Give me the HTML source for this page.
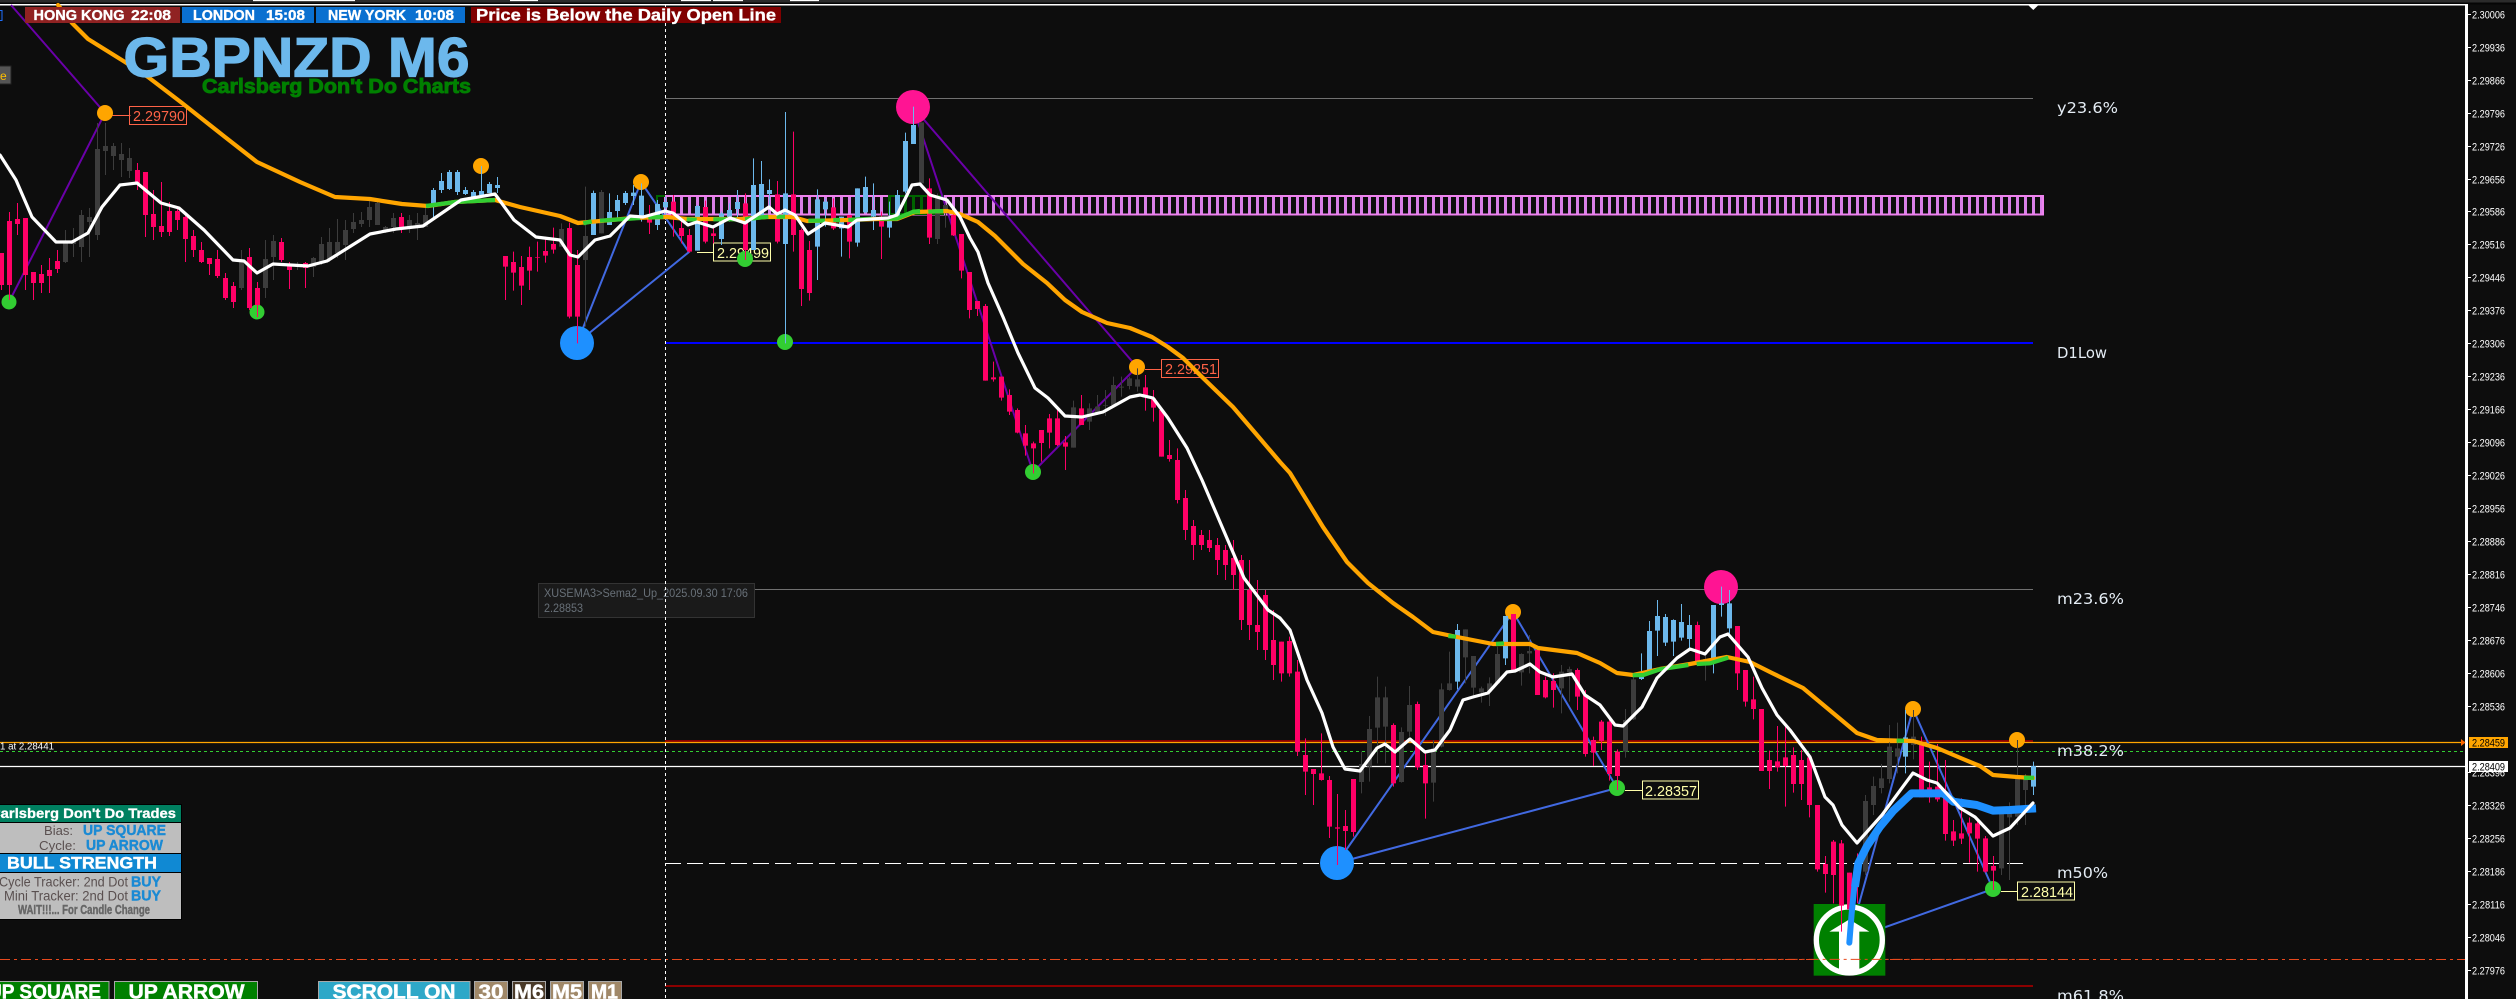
<!DOCTYPE html>
<html>
<head>
<meta charset="utf-8">
<title>GBPNZD M6</title>
<style>
html,body{margin:0;padding:0;background:#0d0d0d;width:2516px;height:999px;overflow:hidden}
svg{display:block;position:absolute;left:0;top:0}
text{font-family:"Liberation Sans",Arial,sans-serif;white-space:pre}
.b{font-weight:bold}
.ax text{fill:#fff;font-size:11px}
.fib text{font-family:"DejaVu Sans",sans-serif;font-size:15px;fill:#e4ecf4}
.pw{stroke:#ff0066;stroke-width:1;fill:none}
.pb{stroke:#ff0066;stroke-width:5;fill:none}
.gw{stroke:#3c3c3c;stroke-width:1;fill:none}
.gb{stroke:#3c3c3c;stroke-width:5;fill:none}
.bw{stroke:#6cb8ec;stroke-width:1;fill:none}
.bb{stroke:#6cb8ec;stroke-width:5;fill:none}
.z .pw,.z .gw,.z .bw{stroke-width:3}
.z .pb,.z .gb,.z .bb{stroke-width:15}
.ma{fill:none;stroke-linejoin:round;stroke-linecap:round}
.gr{fill:none;stroke:#32cd32;stroke-linecap:butt}
</style>
</head>
<body>
<svg width="2516" height="999" viewBox="0 0 2516 999" xmlns="http://www.w3.org/2000/svg">
<rect width="2516" height="999" fill="#0d0d0d"/>
<!-- top strip -->
<rect width="2516" height="2.5" fill="#2b2b2b"/>
<rect y="2.5" width="2516" height="2" fill="#050505"/>
<path d="M253 .5H355M510 .5H538M681 .5H711M713 .5H743M790 .5H819" stroke="#fff" stroke-width="1.2"/>
<rect y="4" width="2467" height="1.5" fill="#fff"/>
<rect x="2465" y="4" width="3" height="995" fill="#fff"/>
<path d="M2028 5L2038.5 5L2033.3 10Z" fill="#fff"/>

<!-- horizontal levels -->
<path d="M665 98.5H2033M665 589.5H2033" stroke="#707070" stroke-width="1"/>
<path d="M665 343H2033" stroke="#0000ff" stroke-width="2"/>
<path d="M665 741H2033M665 986H2033" stroke="#8b0000" stroke-width="2"/>
<path d="M0 742.5H2465" stroke="#ffa500" stroke-width="1.3"/>
<path d="M0 751.5H2465" stroke="#32cd32" stroke-width="1" stroke-dasharray="3 3"/>
<path d="M0 766.5H2465" stroke="#fff" stroke-width="1.2"/>
<path d="M665 863.5H2027" stroke="#fff" stroke-width="1" stroke-dasharray="16 6"/>
<path d="M0 959.5H2465" stroke="#e8491d" stroke-width="1" stroke-dasharray="10 4 3 4"/>
<path d="M2461 739L2465.5 742.5L2461 746Z" fill="#ff6600"/>

<!-- tooltip -->
<rect x="538.5" y="583.5" width="216" height="34" fill="#1a1a1a" stroke="#333"/>
<text x="544" y="597" font-size="12" fill="#687078" textLength="204" lengthAdjust="spacingAndGlyphs">XUSEMA3&gt;Sema2_Up_2025.09.30 17:06</text>
<text x="544" y="612" font-size="12" fill="#687078" textLength="39" lengthAdjust="spacingAndGlyphs">2.28853</text>

<!-- supply box -->
<path d="M664 205H2044" stroke="#d97fe8" stroke-width="19" stroke-dasharray="3 5"/>
<rect x="665" y="196" width="1378" height="18.5" fill="none" stroke="#ee82ee" stroke-width="2"/>
<path d="M888 205H944" stroke="#006400" stroke-width="19" stroke-dasharray="3 5"/>
<path d="M657 213V196H665M888 196H944M888 214H944" stroke="#006400" stroke-width="2" fill="none"/>

<path d="M665.5 5V999" stroke="#fff" stroke-width="1" stroke-dasharray="3 3"/>

<!-- zigzag -->
<g fill="none" stroke="#6a00a8" stroke-width="2">
<path d="M9 302L105 113L11 5"/>
<path d="M1137 367L913 107L1033 472L1137 367"/>
</g>
<g fill="none" stroke="#4169e1" stroke-width="2">
<path d="M577 343L641 182L689 252L577 343"/>
<path d="M1337 863L1513 612L1617 788L1337 863"/>
<path d="M1849 940L1913 709L1993 889L1849 940"/>
</g>

<!-- price callouts -->
<g fill="none" stroke="#ff6347" stroke-width="1">
<path d="M112 115.5H130.5M1145 369.5H1161.5"/>
<rect x="129.5" y="106.5" width="57" height="18"/>
<rect x="1161.5" y="359.5" width="57" height="18"/>
</g>
<g fill="none" stroke="#ffffaa" stroke-width="1">
<path d="M697 252.5H713.5M1625 790.5H1642.5M2001 891.5H2017.5"/>
<rect x="713.5" y="243" width="57" height="18"/>
<rect x="1642.5" y="781" width="56" height="18"/>
<rect x="2017.5" y="882" width="57" height="18"/>
</g>
<g font-size="15" lengthAdjust="spacingAndGlyphs">
<text x="133" y="121" fill="#ff6347" textLength="52" lengthAdjust="spacingAndGlyphs">2.29790</text>
<text x="1165" y="374" fill="#ff6347" textLength="52" lengthAdjust="spacingAndGlyphs">2.29251</text>
<text x="717" y="258" fill="#ffffaa" textLength="52" lengthAdjust="spacingAndGlyphs">2.29499</text>
<text x="1645" y="796" fill="#ffffaa" textLength="52" lengthAdjust="spacingAndGlyphs">2.28357</text>
<text x="2021" y="897" fill="#ffffaa" textLength="52" lengthAdjust="spacingAndGlyphs">2.28144</text>
</g>

<!-- dots -->
<g fill="#ffa500">
<circle cx="105" cy="113" r="8"/><circle cx="481" cy="166" r="8"/><circle cx="641" cy="182" r="8"/>
<circle cx="1137" cy="367" r="8"/><circle cx="1513" cy="612" r="8"/><circle cx="1913" cy="709" r="8"/><circle cx="2017" cy="740" r="8"/>
</g>
<g fill="#32cd32">
<circle cx="9" cy="302" r="7.5"/><circle cx="257" cy="312" r="7.5"/><circle cx="745" cy="259" r="8"/><circle cx="785" cy="342" r="8"/>
<circle cx="1033" cy="472" r="8"/><circle cx="1617" cy="788" r="8"/><circle cx="1993" cy="889" r="8"/>
</g>
<g fill="#ff1493"><circle cx="913" cy="107" r="17"/><circle cx="1721" cy="587" r="17"/></g>
<g fill="#1e90ff"><circle cx="577" cy="343" r="17"/><circle cx="1337" cy="863" r="17"/></g>

<!-- buy icon -->
<g transform="translate(1700 560) scale(.33333)">
<rect x="341" y="1032" width="215" height="215" fill="#008000"/>
<circle cx="448" cy="1140" r="99" fill="none" stroke="#fff" stroke-width="16"/>
<path d="M388 1115L448 1078L508 1115H478V1240H417V1115Z" fill="#fff"/>
<path d="M11 1198H1000" stroke="#e8491d" stroke-width="3" stroke-dasharray="30 12 9 12"/>
</g>

<!-- candles region A -->
<g>
<path class="pw" d="M1.5 253V290M9.5 212V300M17.5 203V235M25.5 218V290M33.5 272V300M41.5 265V293M49.5 258V293M57.5 250V273M137.5 163V190M145.5 172V237M153.5 190V240M161.5 182V237M169.5 202V236M177.5 207V230M185.5 213V262M193.5 230V257M201.5 242V263M209.5 258V275M217.5 250V278M225.5 273V300M233.5 282V308M249.5 248V310M257.5 282V317M281.5 238V262M289.5 262V289M305.5 262V288M401.5 213V233"/>
<path class="pb" d="M1.5 253V285M9.5 221V285M17.5 219V224M25.5 218V275M33.5 272V283M41.5 274V283M49.5 270V276M57.5 261V269M137.5 170V183M145.5 172V215M153.5 214V227M161.5 226V232M169.5 211V232M177.5 211V220M185.5 217V239M193.5 236V250M201.5 250V262M209.5 258V264M217.5 259V276M225.5 278V298M233.5 286V302M249.5 257V308M257.5 288V305M281.5 242V260M289.5 265V270M305.5 263V268M401.5 217V228"/>
<path class="gw" d="M65.5 230V263M73.5 228V257M81.5 210V262M89.5 208V257M97.5 123V240M105.5 123V175M113.5 143V170M121.5 143V177M129.5 148V178M241.5 250V290M265.5 240V298M273.5 235V280M297.5 262V270M313.5 257V277M321.5 237V265M329.5 228V262M337.5 219V258M345.5 220V260M353.5 213V233M361.5 212V227M369.5 198V227M377.5 200V225M385.5 226V233M393.5 213V233M409.5 215V233M417.5 213V240M425.5 208V227"/>
<path class="gb" d="M65.5 242V262M73.5 240V244M81.5 215V247M89.5 217V222M97.5 149V235M105.5 146V151M113.5 146V156M121.5 154V160M129.5 158V171M241.5 260V288M265.5 259V288M273.5 241V257M297.5 265V267M313.5 258V267M321.5 244V262M329.5 242V260M337.5 242V253M345.5 230V245M353.5 222V229M361.5 220V224M369.5 207V220M377.5 203V225M385.5 227V230M393.5 218V227M409.5 220V227M417.5 223V227M425.5 215V227"/>
<path class="bw" d="M433.5 188V220M441.5 173V193M449.5 170V190M457.5 170V195M465.5 187V195M473.5 190V197M481.5 166V195M489.5 182V193M497.5 177V193"/>
<path class="bb" d="M433.5 190V207M441.5 181V190M449.5 172V189M457.5 172V192M465.5 190V194M473.5 192V197M481.5 191V195M489.5 184V193M497.5 185V188"/>
</g>

<!-- candles region B -->
<g class="z" transform="translate(500 130) scale(.33333)">
<path class="pw" d="M16.5 378V510M40.5 365V482M64.5 378V525M88.5 350V480M112.5 335V425M136.5 320V398M160.5 293V371M208.5 278V565M232.5 360V640M448.5 225V312M520.5 195V320M544.5 270V340M568.5 297V368M616.5 212V340M640.5 290V340M736.5 190V390M832.5 153V340M880.5 5V365M904.5 295V528M928.5 333V512M1000.5 205V300"/>
<path class="pb" d="M16.5 378V410M40.5 396V428M64.5 411V467M88.5 381V422M112.5 381V383M136.5 363V377M160.5 342V359M208.5 294V560M232.5 405V560M448.5 265V278M520.5 215V265M544.5 294V318M568.5 315V365M616.5 231V335M640.5 310V318M736.5 220V360M832.5 193V335M880.5 193V315M904.5 300V477M928.5 360V489M1000.5 232V295"/>
<path class="gw" d="M184.5 280V350M256.5 170V590M304.5 180V310"/>
<path class="gb" d="M184.5 297V350M256.5 318V390M304.5 186V310"/>
<path class="bw" d="M280.5 182V315M328.5 190V285M352.5 195V270M376.5 183V225M400.5 165V225M424.5 160V275M472.5 210V300M496.5 200V270M592.5 225V362M664.5 245V345M688.5 220V275M712.5 180V268M760.5 85V360M784.5 93V260M808.5 148V240M856.5 -54V640M952.5 178V450M976.5 205V290"/>
<path class="bb" d="M280.5 189V315M328.5 246V285M352.5 210V243M376.5 189V219M400.5 188V198M424.5 197V260M472.5 222V285M496.5 216V232M592.5 228V362M664.5 250V327M688.5 240V270M712.5 216V237M760.5 165V360M784.5 162V255M808.5 180V192M856.5 190V342M952.5 208V350M976.5 215V238"/>
</g>

<!-- candles region C -->
<g class="z" transform="translate(840 60) scale(.33333)">
<path class="pw" d="M28.5 465V595M124.5 455V597M268.5 355V552M340.5 455V528M364.5 522V655M388.5 636V775M412.5 723V768M436.5 732V962M460.5 905V965M484.5 950V1022M508.5 988V1065M532.5 1045V1120M556.5 1095V1187M580.5 1145V1240M604.5 1110V1205M628.5 1062V1165M652.5 1050V1158M676.5 1128V1230M724.5 1005V1095M916.5 945V1052M940.5 990V1085M964.5 1045V1190M988.5 1140V1205M1012.5 1165V1330"/>
<path class="pb" d="M28.5 465V545M124.5 470V500M268.5 385V533M340.5 465V526M364.5 522V632M388.5 636V750M412.5 723V747M436.5 738V962M460.5 952V958M484.5 950V1013M508.5 1005V1055M532.5 1050V1118M556.5 1120V1157M580.5 1150V1165M604.5 1110V1149M628.5 1075V1118M652.5 1075V1155M676.5 1147V1160M724.5 1045V1095M916.5 982V1005M940.5 1015V1043M964.5 1050V1190M988.5 1185V1197M1012.5 1200V1320"/>
<path class="gw" d="M244.5 187V370M292.5 400V552M316.5 430V503M700.5 1022V1163M748.5 1030V1110M772.5 1005V1065M796.5 990V1068M820.5 950V1040M844.5 950V1010M868.5 950V988M892.5 925V995"/>
<path class="gb" d="M244.5 187V370M292.5 410V537M316.5 435V460M700.5 1042V1163M748.5 1045V1085M772.5 1040V1060M796.5 1035V1037M820.5 975V1035M844.5 980V983M868.5 955V978M892.5 958V980"/>
<path class="bw" d="M4.5 470V590M52.5 385V560M76.5 350V460M100.5 370V510M148.5 425V533M172.5 390V470M196.5 218V400M220.5 140V252"/>
<path class="bb" d="M4.5 470V505M52.5 385V548M76.5 381V457M100.5 450V470M148.5 470V503M172.5 405V470M196.5 243V395M220.5 195V252"/>
</g>

<!-- candles region D -->
<g>
<path class="pw" d="M1185.5 490V540M1193.5 520V560M1201.5 530V550M1209.5 530V552M1217.5 538V575M1225.5 545V580M1233.5 540V590M1241.5 555V630M1249.5 560V640M1257.5 580V650M1265.5 590V660M1273.5 610V680"/>
<path class="pb" d="M1185.5 498V530M1193.5 526V545M1201.5 535V545M1209.5 540V548M1217.5 545V560M1225.5 550V565M1233.5 558V575M1241.5 560V620M1249.5 590V625M1257.5 625V632M1265.5 595V650M1273.5 640V665"/>
</g>

<!-- candles region E -->
<g class="z" transform="translate(1280 420) scale(.33333)">
<path class="pw" d="M4.5 665V785M28.5 650V770M52.5 720V1008M76.5 955V1125M100.5 1047V1155M124.5 940V1082M148.5 1068V1254M172.5 1122V1335M196.5 1170V1290M220.5 1077V1250M340.5 910V1100M412.5 845V1050M436.5 1000V1196M700.5 582V750M772.5 690V825M796.5 770V835M820.5 760V863M892.5 745V870M916.5 810V1010M940.5 950V1038M964.5 900V990M988.5 890V1082M1012.5 988V1110M1252.5 605V728"/>
<path class="pb" d="M4.5 665V760M28.5 663V760M52.5 755V995M76.5 1005V1055M100.5 1047V1062M124.5 1060V1080M148.5 1080V1220M172.5 1222V1226M196.5 1218V1233M220.5 1077V1236M340.5 915V1090M412.5 852V1042M436.5 1035V1090M700.5 582V750M772.5 690V825M796.5 780V832M820.5 783V810M892.5 750V830M916.5 825V1002M940.5 960V998M964.5 905V963M988.5 905V1062M1012.5 995V1068M1252.5 615V725"/>
<path class="gw" d="M244.5 995V1120M268.5 888V1085M292.5 770V1030M316.5 800V1030M364.5 922V1088M388.5 798V950M460.5 960V1145M484.5 790V982M508.5 695V812M556.5 628V790M580.5 708V835M604.5 800V848M628.5 772V858M652.5 680V790M724.5 700V797M748.5 645V760M844.5 735V880M868.5 740V845M1036.5 867V1013M1060.5 770V900M1276.5 700V782"/>
<path class="gb" d="M244.5 1032V1086M268.5 927V1040M292.5 832V923M316.5 832V920M364.5 936V1086M388.5 855V935M460.5 985V1088M484.5 808V980M508.5 790V810M556.5 628V712M580.5 708V803M604.5 805V817M628.5 790V815M652.5 702V790M724.5 702V757M748.5 693V700M844.5 755V805M868.5 747V757M1036.5 900V995M1060.5 778V898M1276.5 717V725"/>
<path class="bw" d="M532.5 612V808M676.5 588V735M1084.5 700V780M1108.5 603V757M1132.5 540V708M1156.5 582V678M1180.5 598V708M1204.5 552V662M1228.5 585V690M1300.5 555V760"/>
<path class="bb" d="M532.5 630V785M676.5 588V715M1084.5 757V777M1108.5 633V755M1132.5 588V632M1156.5 591V668M1180.5 600V665M1204.5 606V653M1228.5 615V657M1300.5 555V720"/>
</g>

<!-- candles region F -->
<g class="z" transform="translate(1700 560) scale(.33333)">
<path class="pw" d="M112.5 198V390M136.5 330V440M160.5 350V478M184.5 447V633M208.5 572V687M232.5 498V635M256.5 498V740M280.5 562V698M304.5 570V720M328.5 590V772M352.5 735V935M376.5 888V998M400.5 840V1030M424.5 840V1115M448.5 938V1048M472.5 880V1030M664.5 530V712M688.5 605V728M712.5 552V725M736.5 600V842M760.5 780V858M784.5 715V852M808.5 772V908M832.5 778V935M856.5 828V938M880.5 888V990"/>
<path class="pb" d="M112.5 198V340M136.5 330V425M160.5 418V447M184.5 447V633M208.5 600V633M232.5 604V622M256.5 592V618M280.5 585V672M304.5 600V672M328.5 592V735M352.5 735V928M376.5 912V942M400.5 845V945M424.5 850V1037M448.5 938V1048M472.5 935V940M664.5 555V712M688.5 682V712M712.5 680V718M736.5 712V822M760.5 814V842M784.5 820V836M808.5 788V820M832.5 790V836M856.5 835V935M880.5 918V932"/>
<path class="gw" d="M496.5 705V945M520.5 650V765M544.5 612V700M568.5 495V670M592.5 488V640M640.5 450V598M904.5 755V945M928.5 727V960M952.5 540V795M976.5 642V795"/>
<path class="gb" d="M496.5 723V935M520.5 678V735M544.5 655V684M568.5 560V657M592.5 565V590M640.5 530V555M904.5 760V925M928.5 757V772M952.5 655V770M976.5 655V690"/>
<path class="bw" d="M64.5 80V170M88.5 90V220M616.5 450V640M1000.5 605V705"/>
<path class="bb" d="M64.5 130V135M88.5 130V205M616.5 532V590M1000.5 618V680"/>
</g>

<!-- blue MA -->
<g class="ma" transform="translate(1700 560) scale(.33333)" stroke="#1e90ff">
<path stroke-width="18" d="M448 1148L455 1060L465 960"/>
<path stroke-width="24" d="M465 980L475 910L500 860L540 800L580 752L635 700L730 700L760 725L830 735L880 752L930 750L1008 745" stroke-linecap="butt"/>
</g>

<!-- orange MA -->
<path class="ma" stroke="#ffa500" stroke-width="4.2" d="M58 5L72 23L88 39L125 62L148 77L182 103L225 137L257 162L300 182L335 197L370 199L402 204L428 206L455 202L495 200L520 207L560 216L578 223L600 221L633 218L667 217L687 219L713 219L740 219L767 217L793 217L807 221L847 220L877 219L897 219L915 212L947 211L960 214L978 222L995 236L1023 264L1047 283L1065 300L1082 312L1107 323L1130 328L1152 337L1168 347L1183 358L1202 377L1233 407L1257 435L1280 462L1290 473L1323 527L1347 562L1368 583L1393 603L1413 617L1433 632L1457 637L1493 644L1530 644L1538 648L1577 653L1600 663L1617 673L1633 675L1660 669L1690 664L1727 657L1750 662L1772 673L1803 688L1827 708L1857 733L1877 740L1913 741L1937 748L1963 759L1980 766L1993 775L2017 777L2033 778"/>
<path class="gr" stroke-width="4.2" d="M426 206L455 202L495 200"/>
<g class="gr" stroke-width="12.6" transform="translate(500 130) scale(.33333)">
<path d="M250 280L275 274M300 272L420 264M445 263L490 260M560 268L590 269M640 268L710 268M735 268L805 260M830 260L855 260M925 272L975 272M1000 270L1020 270M1045 270L1115 266M1140 266L1190 266L1240 245L1260 243"/>
</g>
<g class="gr" stroke-width="12.6" transform="translate(840 60) scale(.33333)">
<path d="M220 455L240 455M265 455L310 453"/>
</g>
<g class="gr" stroke-width="12.6" transform="translate(1280 420) scale(.33333)">
<path d="M505 648L528 650M648 672L672 670M1058 766L1090 765L1140 748L1225 735M1250 732L1290 730L1345 713"/>
</g>
<g class="gr" stroke-width="12.6" transform="translate(1700 560) scale(.33333)">
<path d="M590 542L612 542M972 654L1002 653"/>
</g>

<!-- white MA -->
<path class="ma" stroke="#fff" stroke-width="3.2" d="M0 155L16 180L32 217L56 242L72 242L88 233L102 207L120 185L137 183L161 203L179 208L204 230L233 260L244 261L257 273L273 264L308 266L327 261L370 234L396 229L423 226L461 200L495 194L514 220L536 237L560 240L570 255L578 257L595 240L610 236L630 216L643 217L665 211L673 213L688 225L697 222L713 227L730 218L745 223L757 215L769 207L777 214L785 210L795 215L808 234L825 223L848 227L857 220L888 218L897 215L912 185L920 184L930 195L947 200L960 217L970 238L978 252L988 283L1003 317L1018 353L1035 388L1048 398L1065 416L1082 417L1103 412L1130 397L1140 395L1153 398L1168 418L1187 448L1202 480L1211 501L1244 578L1268 610L1280 618L1290 630L1307 680L1322 713L1333 747L1345 769L1360 771L1377 748L1385 744L1395 752L1410 739L1425 752L1435 750L1450 730L1463 700L1473 697L1488 693L1507 672L1515 671L1530 664L1540 672L1553 677L1572 674L1585 695L1600 705L1615 725L1623 726L1642 707L1657 678L1677 658L1690 649L1705 654L1720 637L1728 634L1748 657L1762 688L1777 715L1790 730L1810 757L1825 797L1833 805L1842 825L1857 843L1882 815L1913 773L1927 780L1937 783L1960 808L1975 817L1993 836L2010 828L2033 803"/>

<!-- top labels -->
<rect x="25" y="7" width="155" height="16" fill="#902222"/>
<rect x="182" y="7" width="132" height="16" fill="#0a70d0"/>
<rect x="316" y="7" width="149" height="16" fill="#0a70d0"/>
<rect x="471" y="7" width="310" height="16" fill="#800000"/>
<g class="b" fill="#fff" font-size="14.5" stroke="#fff" stroke-width=".35">
<text x="33.5" y="20" textLength="91" lengthAdjust="spacingAndGlyphs">HONG KONG</text>
<text x="131" y="20" textLength="40" lengthAdjust="spacingAndGlyphs">22:08</text>
<text x="193" y="20" textLength="62" lengthAdjust="spacingAndGlyphs">LONDON</text>
<text x="266" y="20" textLength="39" lengthAdjust="spacingAndGlyphs">15:08</text>
<text x="328" y="20" textLength="78" lengthAdjust="spacingAndGlyphs">NEW YORK</text>
<text x="415" y="20" textLength="39" lengthAdjust="spacingAndGlyphs">10:08</text>
<text x="476" y="20.5" font-size="16.5" textLength="300" lengthAdjust="spacingAndGlyphs">Price is Below the Daily Open Line</text>
</g>
<text class="b" x="123.5" y="76.5" font-size="56" fill="#6cb8ec" stroke="#6cb8ec" stroke-width="1.2" textLength="346" lengthAdjust="spacingAndGlyphs">GBPNZD M6</text>
<text class="b" x="202" y="93" font-size="20" fill="#008000" stroke="#008000" stroke-width=".9" textLength="269" lengthAdjust="spacingAndGlyphs">Carlsberg Don't Do Charts</text>

<!-- left stubs -->
<rect x="-1" y="66" width="12" height="18" fill="#555" stroke="#222"/>
<text x="0" y="80" font-size="12" fill="#ffc000">e</text>
<rect x="-1" y="10.5" width="3" height="10" fill="none" stroke="#1e70ff"/>
<text x="0" y="749.5" font-size="10.5" fill="#fff" textLength="54" lengthAdjust="spacingAndGlyphs">1 at 2.28441</text>

<!-- fib labels -->
<g class="fib">
<text x="2057" y="113" textLength="61" lengthAdjust="spacingAndGlyphs">y23.6%</text>
<text x="2057" y="358" textLength="50" lengthAdjust="spacingAndGlyphs">D1Low</text>
<text x="2057" y="604" textLength="67" lengthAdjust="spacingAndGlyphs">m23.6%</text>
<text x="2057" y="756" textLength="67" lengthAdjust="spacingAndGlyphs">m38.2%</text>
<text x="2057" y="878" textLength="51" lengthAdjust="spacingAndGlyphs">m50%</text>
<text x="2057" y="1001" textLength="67" lengthAdjust="spacingAndGlyphs">m61.8%</text>
</g>

<!-- info panel -->
<rect x="0" y="804" width="182" height="116" fill="#000"/>
<rect x="0" y="805" width="181" height="17" fill="#008060"/>
<rect x="0" y="823" width="181" height="30" fill="#bebebe"/>
<rect x="0" y="854" width="181" height="18" fill="#1089d3"/>
<rect x="0" y="873" width="181" height="46" fill="#bebebe"/>
<text class="b" x="-10" y="818" font-size="14" fill="#fff" stroke="#fff" stroke-width=".3" textLength="186" lengthAdjust="spacingAndGlyphs">Carlsberg Don't Do Trades</text>
<text x="44" y="835" font-size="13" fill="#5a5050" textLength="29" lengthAdjust="spacingAndGlyphs">Bias:</text>
<text class="b" x="83" y="835" font-size="14.5" fill="#1a8ad4" stroke="#1a8ad4" stroke-width=".4" textLength="83" lengthAdjust="spacingAndGlyphs">UP SQUARE</text>
<text x="39" y="850" font-size="13" fill="#5a5050" textLength="37" lengthAdjust="spacingAndGlyphs">Cycle:</text>
<text class="b" x="86" y="850" font-size="14.5" fill="#1a8ad4" stroke="#1a8ad4" stroke-width=".4" textLength="77" lengthAdjust="spacingAndGlyphs">UP ARROW</text>
<text class="b" x="7" y="868.5" font-size="17" fill="#fff" stroke="#fff" stroke-width=".4" textLength="150" lengthAdjust="spacingAndGlyphs">BULL STRENGTH</text>
<text x="-1" y="886.5" font-size="14" fill="#5a5050" textLength="129" lengthAdjust="spacingAndGlyphs">Cycle Tracker: 2nd Dot</text>
<text class="b" x="131" y="886.5" font-size="15" fill="#1a8ad4" stroke="#1a8ad4" stroke-width=".4" textLength="30" lengthAdjust="spacingAndGlyphs">BUY</text>
<text x="4" y="900.5" font-size="14" fill="#5a5050" textLength="124" lengthAdjust="spacingAndGlyphs">Mini Tracker: 2nd Dot</text>
<text class="b" x="131" y="900.5" font-size="15" fill="#1a8ad4" stroke="#1a8ad4" stroke-width=".4" textLength="30" lengthAdjust="spacingAndGlyphs">BUY</text>
<text class="b" x="18" y="914" font-size="12.5" fill="#666" stroke="#666" stroke-width=".4" textLength="132" lengthAdjust="spacingAndGlyphs">WAIT!!!... For Candle Change</text>

<!-- bottom buttons -->
<g stroke="#a8a8a8" stroke-width="1">
<rect x="-2" y="981.5" width="111" height="20" fill="#008000"/>
<rect x="114.5" y="981.5" width="143" height="20" fill="#008000"/>
<rect x="318.5" y="981.5" width="151.5" height="20" fill="#2ea8c8"/>
<rect x="474.5" y="981.5" width="33" height="20" fill="#a08868"/>
<rect x="512.5" y="981.5" width="33" height="20" fill="#4a3a28"/>
<rect x="550.5" y="981.5" width="33" height="20" fill="#a08868"/>
<rect x="588.5" y="981.5" width="33" height="20" fill="#a08868"/>
</g>
<g class="b" fill="#fff" font-size="20" stroke="#fff" stroke-width=".5">
<text x="-12" y="998.5" textLength="113" lengthAdjust="spacingAndGlyphs">UP SQUARE</text>
<text x="128.5" y="998.5" textLength="116" lengthAdjust="spacingAndGlyphs">UP ARROW</text>
<text x="332.5" y="998.5" textLength="123" lengthAdjust="spacingAndGlyphs">SCROLL ON</text>
<text x="478.5" y="998.5" textLength="25" lengthAdjust="spacingAndGlyphs">30</text>
<text x="514" y="998.5" textLength="30" lengthAdjust="spacingAndGlyphs">M6</text>
<text x="552" y="998.5" textLength="30" lengthAdjust="spacingAndGlyphs">M5</text>
<text x="591" y="998.5" textLength="27" lengthAdjust="spacingAndGlyphs">M1</text>
</g>

<!-- axis -->
<path stroke="#fff" stroke-width="1" d="M2468 14.5h3M2468 47.5h3M2468 80.5h3M2468 113.5h3M2468 146.5h3M2468 179.5h3M2468 211.5h3M2468 244.5h3M2468 277.5h3M2468 310.5h3M2468 343.5h3M2468 376.5h3M2468 409.5h3M2468 442.5h3M2468 475.5h3M2468 508.5h3M2468 541.5h3M2468 574.5h3M2468 607.5h3M2468 640.5h3M2468 673.5h3M2468 706.5h3M2468 772.5h3M2468 805.5h3M2468 838.5h3M2468 871.5h3M2468 904.5h3M2468 937.5h3M2468 970.5h3"/>
<g class="ax">
<text x="2472" y="18.5" textLength="33" lengthAdjust="spacingAndGlyphs">2.30006</text>
<text x="2472" y="51.5" textLength="33" lengthAdjust="spacingAndGlyphs">2.29936</text>
<text x="2472" y="84.5" textLength="33" lengthAdjust="spacingAndGlyphs">2.29866</text>
<text x="2472" y="117.5" textLength="33" lengthAdjust="spacingAndGlyphs">2.29796</text>
<text x="2472" y="150.5" textLength="33" lengthAdjust="spacingAndGlyphs">2.29726</text>
<text x="2472" y="183.5" textLength="33" lengthAdjust="spacingAndGlyphs">2.29656</text>
<text x="2472" y="215.5" textLength="33" lengthAdjust="spacingAndGlyphs">2.29586</text>
<text x="2472" y="248.5" textLength="33" lengthAdjust="spacingAndGlyphs">2.29516</text>
<text x="2472" y="281.5" textLength="33" lengthAdjust="spacingAndGlyphs">2.29446</text>
<text x="2472" y="314.5" textLength="33" lengthAdjust="spacingAndGlyphs">2.29376</text>
<text x="2472" y="347.5" textLength="33" lengthAdjust="spacingAndGlyphs">2.29306</text>
<text x="2472" y="380.5" textLength="33" lengthAdjust="spacingAndGlyphs">2.29236</text>
<text x="2472" y="413.5" textLength="33" lengthAdjust="spacingAndGlyphs">2.29166</text>
<text x="2472" y="446.5" textLength="33" lengthAdjust="spacingAndGlyphs">2.29096</text>
<text x="2472" y="479.5" textLength="33" lengthAdjust="spacingAndGlyphs">2.29026</text>
<text x="2472" y="512.5" textLength="33" lengthAdjust="spacingAndGlyphs">2.28956</text>
<text x="2472" y="545.5" textLength="33" lengthAdjust="spacingAndGlyphs">2.28886</text>
<text x="2472" y="578.5" textLength="33" lengthAdjust="spacingAndGlyphs">2.28816</text>
<text x="2472" y="611.5" textLength="33" lengthAdjust="spacingAndGlyphs">2.28746</text>
<text x="2472" y="644.5" textLength="33" lengthAdjust="spacingAndGlyphs">2.28676</text>
<text x="2472" y="677.5" textLength="33" lengthAdjust="spacingAndGlyphs">2.28606</text>
<text x="2472" y="710.5" textLength="33" lengthAdjust="spacingAndGlyphs">2.28536</text>
<text x="2472" y="776.5" textLength="33" lengthAdjust="spacingAndGlyphs">2.28396</text>
<text x="2472" y="809.5" textLength="33" lengthAdjust="spacingAndGlyphs">2.28326</text>
<text x="2472" y="842.5" textLength="33" lengthAdjust="spacingAndGlyphs">2.28256</text>
<text x="2472" y="875.5" textLength="33" lengthAdjust="spacingAndGlyphs">2.28186</text>
<text x="2472" y="908.5" textLength="33" lengthAdjust="spacingAndGlyphs">2.28116</text>
<text x="2472" y="941.5" textLength="33" lengthAdjust="spacingAndGlyphs">2.28046</text>
<text x="2472" y="974.5" textLength="33" lengthAdjust="spacingAndGlyphs">2.27976</text>
</g>
<rect x="2469" y="737" width="39" height="11" fill="#ffa500"/>
<text x="2472" y="746.5" font-size="11" fill="#000" textLength="33" lengthAdjust="spacingAndGlyphs">2.28459</text>
<rect x="2469" y="761" width="39" height="11" fill="#fff"/>
<text x="2472" y="770.5" font-size="11" fill="#000" textLength="33" lengthAdjust="spacingAndGlyphs">2.28409</text>
</svg>
</body>
</html>
